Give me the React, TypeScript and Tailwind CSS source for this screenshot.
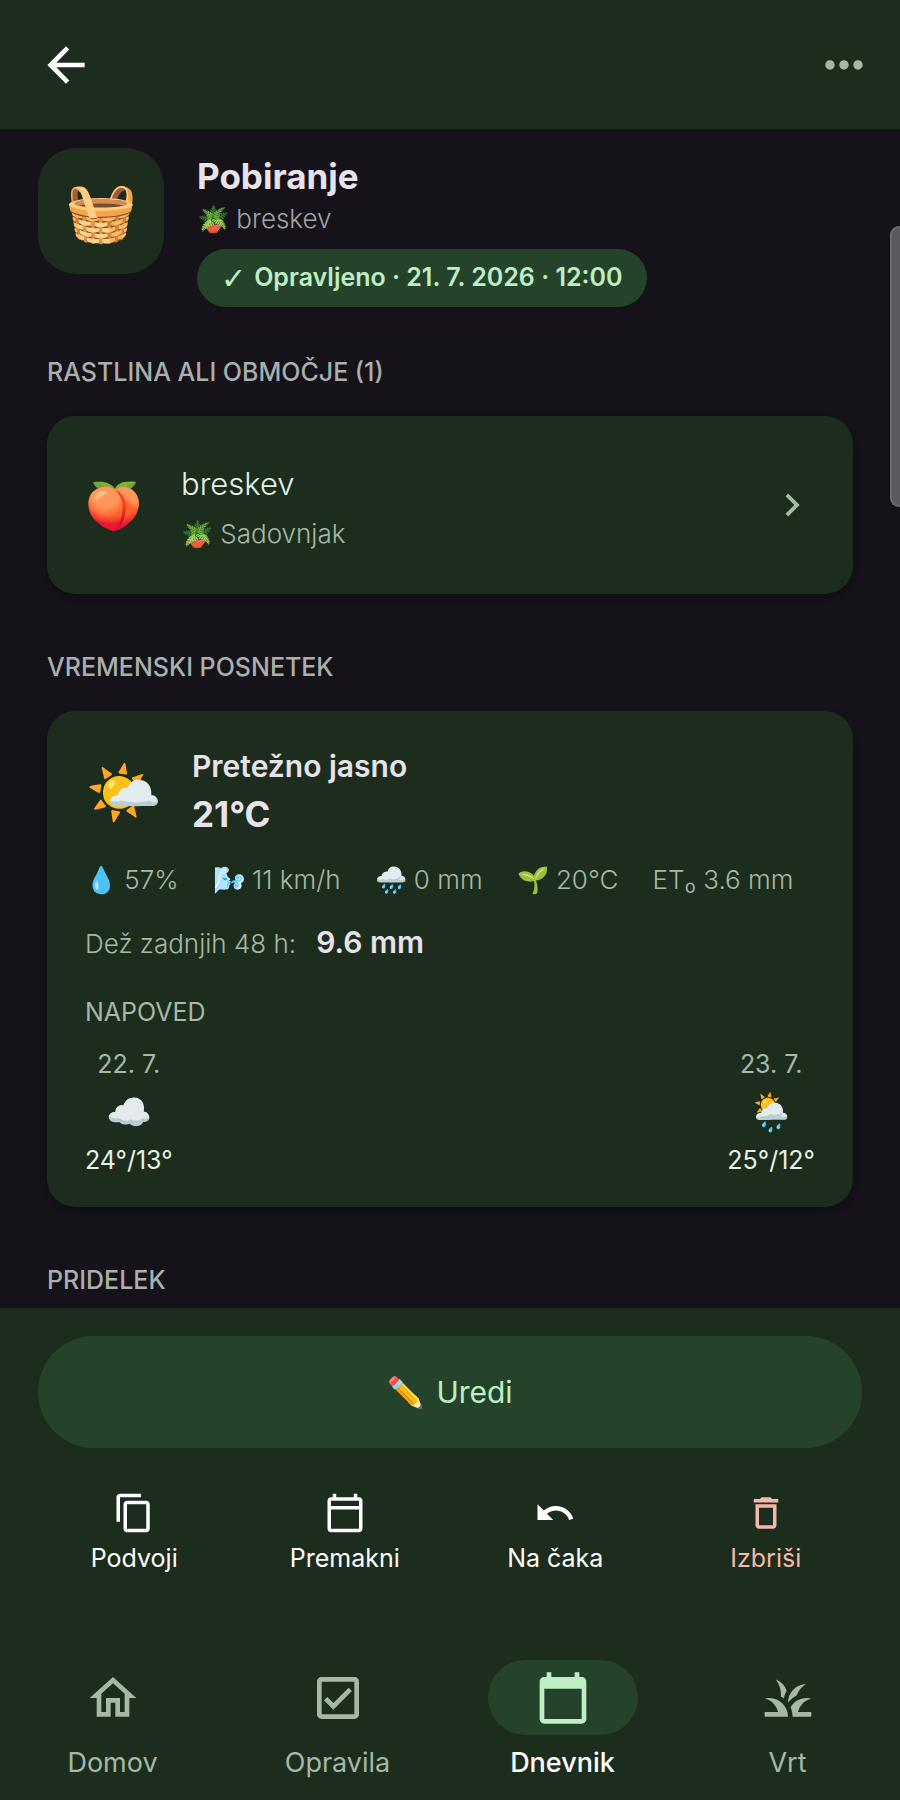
import type { ComponentType } from "react";
import {
  MdArrowBack,
  MdCalendarToday,
  MdChevronRight,
  MdDeleteOutline,
  MdGrass,
  MdMoreHoriz,
  MdOutlineCalendarToday,
  MdOutlineCheckBox,
  MdOutlineContentCopy,
  MdOutlineHome,
  MdUndo,
} from "react-icons/md";

type Icon = ComponentType<{ className?: string }>;

const stats = [
  { emoji: "💧", value: "57%" },
  { emoji: "🌬️", value: "11 km/h" },
  { emoji: "🌧️", value: "0 mm" },
  { emoji: "🌱", value: "20°C" },
  { emoji: "", value: "ET₀ 3.6 mm" },
];

const forecast = [
  { date: "22. 7.", emoji: "☁️", temps: "24°/13°" },
  { date: "23. 7.", emoji: "🌦️", temps: "25°/12°" },
];

const actions: { label: string; icon: Icon; danger?: boolean }[] = [
  { label: "Podvoji", icon: MdOutlineContentCopy },
  { label: "Premakni", icon: MdOutlineCalendarToday },
  { label: "Na čaka", icon: MdUndo },
  { label: "Izbriši", icon: MdDeleteOutline, danger: true },
];

const tabs: { label: string; icon: Icon; active?: boolean }[] = [
  { label: "Domov", icon: MdOutlineHome },
  { label: "Opravila", icon: MdOutlineCheckBox },
  { label: "Dnevnik", icon: MdCalendarToday, active: true },
  { label: "Vrt", icon: MdGrass },
];

function SectionTitle({ children }: { children: string }) {
  return <h2 className="text-[25px] leading-8 font-medium text-[#a8afac]">{children}</h2>;
}

function Hero() {
  return (
    <section className="flex items-start gap-[33px] px-[38px]">
      <div className="flex size-[126px] shrink-0 items-center justify-center rounded-[38px] bg-[#1c2d1d] text-[58px] leading-none">
        🧺
      </div>
      <div className="flex flex-col items-start pt-2">
        <h1 className="text-[35px] leading-10 font-bold text-[#e8e2ea]">Pobiranje</h1>
        <p className="mt-[5px] text-[26px] leading-9 font-light text-[#a0a3a3]">🪴 breskev</p>
        <p className="mt-3 flex h-[58px] items-center gap-2 rounded-full bg-[#25432b] px-6 text-[25px] font-semibold text-[#bdeec4]">
          <span className="font-['DejaVu_Sans',sans-serif] text-[30px] font-bold">✓</span>
          <span>Opravljeno · 21. 7. 2026 · 12:00</span>
        </p>
      </div>
    </section>
  );
}

function PlantCard() {
  return (
    <a
      href="#breskev"
      className="mt-7 flex h-[178px] items-center rounded-[28px] bg-[#1c2d1d] px-[38px] shadow-[0_3px_6px_rgba(0,0,0,0.3)]"
    >
      <span className="w-[96px] text-[46px] leading-none">🍑</span>
      <span className="flex grow flex-col gap-3 pt-[6px]">
        <span className="text-[31px] leading-10 font-light text-[#e6f0e4]">breskev</span>
        <span className="text-[26px] leading-9 font-light text-[#a6b8a6]">🪴 Sadovnjak</span>
      </span>
      <MdChevronRight className="size-[46px] text-[#a6b8a6]" />
    </a>
  );
}

function WeatherCard() {
  return (
    <div className="mt-7 rounded-[28px] bg-[#1c2d1d] px-[38px] pt-[35px] pb-[31px] shadow-[0_3px_6px_rgba(0,0,0,0.3)]">
      <div className="flex items-center gap-[30px]">
        <span className="text-[62px] leading-none">🌤️</span>
        <div className="text-[#e8e2ea]">
          <h3 className="text-[30px] leading-10 font-semibold">Pretežno jasno</h3>
          <p className="mt-1 text-[35px] leading-[48px] font-bold">21°C</p>
        </div>
      </div>
      <ul className="mt-6 flex flex-wrap gap-x-[34px] text-[26px] leading-9 font-light text-[#a6b8a6]">
        {stats.map((s) => (
          <li key={s.value}>
            {s.emoji} {s.value}
          </li>
        ))}
      </ul>
      <p className="mt-6 flex items-baseline gap-5 leading-10">
        <span className="text-[26px] font-light text-[#a6b8a6]">Dež zadnjih 48 h:</span>
        <span className="text-[30px] font-semibold text-[#e8e2ea]">9.6 mm</span>
      </p>
      <h4 className="mt-8 text-[25px] leading-8 text-[#a6b8a6]">NAPOVED</h4>
      <div className="mt-5 flex justify-between text-[25px] leading-8">
        {forecast.map((f) => (
          <div key={f.date} className="flex flex-col items-center">
            <span className="text-[#a6b8a6]">{f.date}</span>
            <span className="my-2 text-[37px] leading-12">{f.emoji}</span>
            <span className="text-[#e6f0e4]">{f.temps}</span>
          </div>
        ))}
      </div>
    </div>
  );
}

export default function App() {
  return (
    <div className="flex h-screen flex-col bg-[#151219] font-['Inter','Noto_Sans',sans-serif]">
      <header className="flex h-[129px] shrink-0 items-center justify-between bg-[#1c2d1d] px-[38px]">
        <button type="button" aria-label="Nazaj" className="text-white">
          <MdArrowBack className="size-14" />
        </button>
        <button type="button" aria-label="Več možnosti" className="-mr-[10px] text-[#a6b8a6]">
          <MdMoreHoriz className="size-14" />
        </button>
      </header>

      <div className="relative min-h-0 grow">
        <main className="h-full overflow-y-auto pt-[19px] [scrollbar-width:none]">
          <Hero />
          <div className="px-[47px]">
            <section className="mt-[49px]">
              <SectionTitle>RASTLINA ALI OBMOČJE (1)</SectionTitle>
              <PlantCard />
            </section>
            <section className="mt-[57px]">
              <SectionTitle>VREMENSKI POSNETEK</SectionTitle>
              <WeatherCard />
            </section>
            <section className="mt-[57px]">
              <SectionTitle>PRIDELEK</SectionTitle>
            </section>
          </div>
        </main>
        <div className="absolute top-[97px] right-0 h-[281px] w-[10px] rounded-l-[9px] border-2 border-r-0 border-[#6d6c71] bg-[#5a595e]" />
      </div>

      <footer className="shrink-0 bg-[#1c2d1d]">
        <div className="px-[38px] pt-7">
          <button
            type="button"
            className="flex h-[112px] w-full items-center justify-center gap-3 rounded-full bg-[#25432b] text-[30px] text-[#bdeec4]"
          >
            <span>✏️</span>
            <span>Uredi</span>
          </button>
        </div>
        <div className="mt-11 grid grid-cols-4 px-[29px]">
          {actions.map(({ label, icon: ActionIcon, danger }) => (
            <button
              key={label}
              type="button"
              className={`flex flex-col items-center gap-[6px] text-[25px] leading-9 ${danger ? "text-[#f4b8aa]" : "text-white"}`}
            >
              <ActionIcon className="size-[42px]" />
              <span>{label}</span>
            </button>
          ))}
        </div>
        <nav className="mt-[84px] grid grid-cols-4 pb-[17px]">
          {tabs.map(({ label, icon: TabIcon, active }) => (
            <a
              key={label}
              href={`#${label.toLowerCase()}`}
              className={`flex flex-col items-center gap-2 text-[27px] leading-10 ${active ? "font-medium text-white" : "text-[#a6b8a6]"}`}
            >
              <span
                className={`flex h-[75px] w-[150px] items-center justify-center rounded-full ${active ? "bg-[#25432b] text-[#bdeec4]" : ""}`}
              >
                <TabIcon className="size-14" />
              </span>
              <span>{label}</span>
            </a>
          ))}
        </nav>
      </footer>
    </div>
  );
}
